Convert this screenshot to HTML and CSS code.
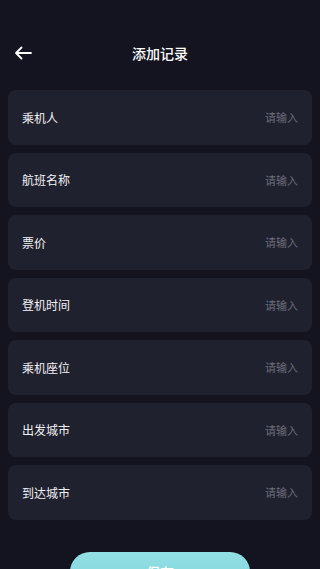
FILE: index.html
```html
<!DOCTYPE html>
<html lang="zh">
<head>
    <meta charset="UTF-8">
    <meta name="viewport" content="width=device-width, initial-scale=1.0">
    <title>添加记录</title>
    <link rel="stylesheet" href="styles.css">
</head>
<body>
    <div class="header">
        <svg class="back" width="18" height="14" viewBox="0 0 18 14">
            <path d="M17 7H2M7.5 1.5L2 7l5.5 5.5" fill="none" stroke="#fff" stroke-width="1.8" stroke-linecap="round" stroke-linejoin="round"/>
        </svg>
        <div class="title">添加记录</div>
    </div>

    <div class="form">
        <div class="row"><span class="label">乘机人</span><span class="hint">请输入</span></div>
        <div class="row"><span class="label">航班名称</span><span class="hint">请输入</span></div>
        <div class="row"><span class="label">票价</span><span class="hint">请输入</span></div>
        <div class="row"><span class="label">登机时间</span><span class="hint">请输入</span></div>
        <div class="row"><span class="label">乘机座位</span><span class="hint">请输入</span></div>
        <div class="row"><span class="label">出发城市</span><span class="hint">请输入</span></div>
        <div class="row"><span class="label">到达城市</span><span class="hint">请输入</span></div>
    </div>

    <div class="save-wrap">
        <div class="save">保存</div>
    </div>
</body>
</html>
```

FILE: styles.css
```css
* {
    margin: 0;
    padding: 0;
    box-sizing: border-box;
}

body {
    width: 320px;
    height: 569px;
    overflow: hidden;
    background: #13141f;
    font-family: "Noto Sans CJK SC", "Noto Sans", sans-serif;
    color: #fff;
}

.header {
    position: relative;
    height: 104px;
    padding-top: 39px;
    display: flex;
    justify-content: center;
}

.back {
    position: absolute;
    left: 14px;
    top: 46px;
}

.title {
    font-size: 14px;
    line-height: 28px;
    font-weight: 500;
}

.form {
    display: flex;
    flex-direction: column;
    gap: 8px;
    padding: 0 8px;
    margin-top: -14px;
}

.row {
    height: 54.5px;
    background: #20212f;
    border-radius: 8px;
    display: flex;
    align-items: center;
    justify-content: space-between;
    padding: 0 14px;
}

.label {
    font-size: 12px;
    color: #f2f2f5;
}

.hint {
    font-size: 11px;
    color: #6b6c78;
}

.save-wrap {
    display: flex;
    justify-content: center;
    margin-top: 32px;
}

.save {
    width: 180px;
    height: 40px;
    border-radius: 20px;
    background: linear-gradient(180deg, #92e0e4 0%, #7fd3da 100%);
    color: #fff;
    font-size: 14px;
    font-weight: 500;
    text-align: center;
    line-height: 40px;
}
```
